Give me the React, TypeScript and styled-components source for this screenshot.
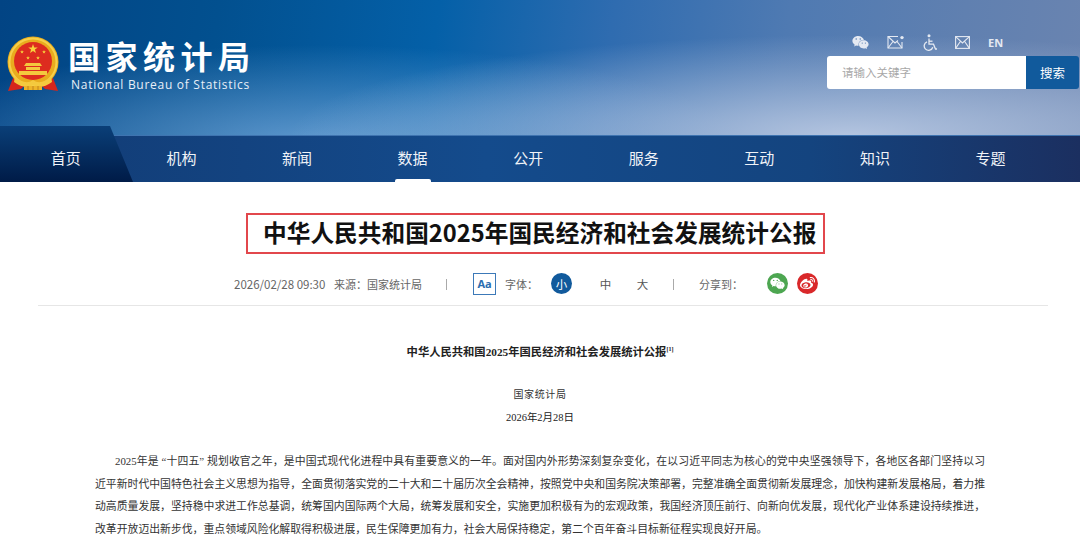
import styled, { createGlobalStyle } from 'styled-components';
import { FaWeixin, FaWeibo } from 'react-icons/fa';

const GlobalStyle = createGlobalStyle`
  html, body {
    margin: 0;
    padding: 0;
    height: 553px;
    overflow: hidden;
    background: #fff;
    font-family: "Noto Sans CJK SC", sans-serif;
  }
  * { box-sizing: border-box; }
`;

const navItems = ['首页', '机构', '新闻', '数据', '公开', '服务', '互动', '知识', '专题'];

const Star = ({ x, y, r }: { x: number; y: number; r: number }) => {
  const pts = Array.from({ length: 10 }, (_, i) => {
    const a = -Math.PI / 2 + (i * Math.PI) / 5;
    const d = i % 2 === 0 ? r : r * 0.4;
    return `${(x + d * Math.cos(a)).toFixed(2)},${(y + d * Math.sin(a)).toFixed(2)}`;
  }).join(' ');
  return <polygon points={pts} fill="#f8d23c" />;
};

const Emblem = () => (
  <svg width="52" height="57" viewBox="0 0 52 57">
    <path d="M6 42 L1 55 L14 53 L20 47 Z" fill="#d5261c" />
    <path d="M46 42 L51 55 L38 53 L32 47 Z" fill="#d5261c" />
    <circle cx="26" cy="26" r="25.5" fill="#e9ac1e" />
    <circle cx="26" cy="26" r="23.5" fill="none" stroke="#f6d04a" strokeWidth="2" />
    <circle cx="26" cy="25" r="19" fill="#dd2c1f" />
    <Star x={26} y={13} r={5} />
    <Star x={15} y={16} r={2} />
    <Star x={37} y={16} r={2} />
    <Star x={21} y={22} r={2} />
    <Star x={31} y={22} r={2} />
    <path d="M17 30 H35 L33 27 H19 Z M19 31 H33 V34 H19 Z M12 35 H40 V39 H12 Z" fill="#f4c93e" />
    <path d="M8 40 Q18 50 26 44 Q34 50 44 40 L45 46 Q34 54 26 49 Q18 54 7 46 Z" fill="#f4c93e" />
    <path d="M17 50 H35 V54 H17 Z" fill="#eeb62a" />
    <path d="M21 50 V54 M26 50 V54 M31 50 V54" stroke="#b5761a" strokeWidth="0.8" />
  </svg>
);

const MailGearIcon = () => (
  <svg width="18" height="14" viewBox="0 0 18 14" fill="none" stroke="#e4e9f2" strokeWidth="1.1">
    <path d="M11 1.5 H1 V13 H15 V7" />
    <path d="M1 1.5 L8 8 L11 5.5 M1 13 L6 6.5 M15 13 L10 6.5" />
    <circle cx="15" cy="2.6" r="1.7" fill="#e4e9f2" stroke="none" />
  </svg>
);

const MailIcon = () => (
  <svg width="15" height="13" viewBox="0 0 15 13" fill="none" stroke="#e4e9f2" strokeWidth="1.1">
    <rect x="0.6" y="0.6" width="13.8" height="11.8" />
    <path d="M0.6 0.6 L7.5 7 L14.4 0.6 M0.6 12.4 L5.5 5.2 M14.4 12.4 L9.5 5.2" />
  </svg>
);

const WheelchairIcon = () => (
  <svg width="14" height="17" viewBox="0 0 14 17" fill="none" stroke="#e4e9f2" strokeWidth="1.3">
    <circle cx="6" cy="1.8" r="1.5" fill="#e4e9f2" stroke="none" />
    <path d="M6 4.5 V10.2 H10.5 L12.5 15 H14" />
    <path d="M6 7.2 H9.5" />
    <path d="M4 7.8 A4.4 4.4 0 1 0 9.8 13.2" />
  </svg>
);

const App = () => (
  <Page>
    <GlobalStyle />
    <Header>
      <Logo>
        <Emblem />
        <LogoText>
          <LogoTitle>国家统计局</LogoTitle>
          <LogoSub>National Bureau of Statistics</LogoSub>
        </LogoText>
      </Logo>
      <Tools>
        <ToolIcons>
          <FaWeixin size={17} />
          <MailGearIcon />
          <WheelchairIcon />
          <MailIcon />
          <EnLink>EN</EnLink>
        </ToolIcons>
        <Search>
          <SearchInput>请输入关键字</SearchInput>
          <SearchBtn>搜索</SearchBtn>
        </Search>
      </Tools>
    </Header>
    <Nav>
      <HomeTab />
      {navItems.map((item) => (
        <NavItem key={item} $active={item === '数据'}>
          {item}
        </NavItem>
      ))}
    </Nav>
    <Main>
      <TitleRow>
        <Title>中华人民共和国2025年国民经济和社会发展统计公报</Title>
      </TitleRow>
      <Meta>
        <MetaDate $w={100}>2026/02/28 09:30</MetaDate>
        <MetaText $w={112}>来源：国家统计局</MetaText>
        <Sep $w={27} />
        <AaBox>Aa</AaBox>
        <MetaText $w={46} $ml={9}>字体：</MetaText>
        <SizeBtn $active $mr={23}>小</SizeBtn>
        <SizeBtn $mr={16}>中</SizeBtn>
        <SizeBtn $mr={20}>大</SizeBtn>
        <Sep $w={26} />
        <MetaText $w={68}>分享到：</MetaText>
        <ShareRound $bg="#4da651">
          <FaWeixin size={15} />
        </ShareRound>
        <ShareRound $bg="#d9282a">
          <FaWeibo size={15} />
        </ShareRound>
      </Meta>
      <Article>
        <ArticleTitle>
          中华人民共和国2025年国民经济和社会发展统计公报<Note>[1]</Note>
        </ArticleTitle>
        <Org>国家统计局</Org>
        <ArticleDate>2026年2月28日</ArticleDate>
        <Para>
          2025年是 “十四五” 规划收官之年，是中国式现代化进程中具有重要意义的一年。面对国内外形势深刻复杂变化，在以习近平同志为核心的党中央坚强领导下，各地区各部门坚持以习近平新时代中国特色社会主义思想为指导，全面贯彻落实党的二十大和二十届历次全会精神，按照党中央和国务院决策部署，完整准确全面贯彻新发展理念，加快构建新发展格局，着力推动高质量发展，坚持稳中求进工作总基调，统筹国内国际两个大局，统筹发展和安全，实施更加积极有为的宏观政策，我国经济顶压前行、向新向优发展，现代化产业体系建设持续推进，改革开放迈出新步伐，重点领域风险化解取得积极进展，民生保障更加有力，社会大局保持稳定，第二个百年奋斗目标新征程实现良好开局。
        </Para>
      </Article>
    </Main>
  </Page>
);

export default App;

const Page = styled.div`
  width: 1080px;
  height: 553px;
  overflow: hidden;
  background: #fff;
`;

const Header = styled.header`
  height: 135px;
  padding: 36px 1px 0 7px;
  display: flex;
  justify-content: space-between;
  background:
    radial-gradient(ellipse 560px 100px at 850px 135px, rgba(184, 200, 226, 0.95), rgba(184, 200, 226, 0) 100%),
    radial-gradient(ellipse 420px 100px at 320px 145px, rgba(120, 170, 220, 0.8), rgba(120, 170, 220, 0) 100%),
    linear-gradient(98deg, #024484 0%, #02508f 20%, #0460a8 40%, #2f6cb0 56%, #4f7ab2 72%, #6080b0 88%, #6a84b0 100%);
`;

const Logo = styled.div`
  display: flex;
  gap: 9px;
  align-items: flex-start;
`;

const LogoText = styled.div`
  display: flex;
  flex-direction: column;
  margin-top: 1px;
`;

const LogoTitle = styled.div`
  font-size: 32px;
  font-weight: 700;
  line-height: 36px;
  letter-spacing: 5.5px;
  color: #fff;
  white-space: nowrap;
`;

const LogoSub = styled.div`
  font-family: "Open Sans", "Liberation Sans", sans-serif;
  font-size: 12px;
  line-height: 17px;
  margin-top: 3px;
  margin-left: 3px;
  letter-spacing: 0.72px;
  color: #e8eff8;
  white-space: nowrap;
`;

const Tools = styled.div`
  display: flex;
  flex-direction: column;
  width: 252px;
  margin-top: -1px;
`;

const ToolIcons = styled.div`
  display: flex;
  align-items: center;
  height: 14px;
  gap: 18px;
  padding-left: 25px;
  color: #e4e9f2;
  margin-bottom: 7px;
`;

const EnLink = styled.span`
  font-family: "Open Sans", "Liberation Sans", sans-serif;
  font-size: 11px;
  font-weight: 700;
`;

const Search = styled.div`
  display: flex;
  height: 33px;
`;

const SearchInput = styled.div`
  width: 199px;
  background: #fff;
  border-radius: 3px 0 0 3px;
  padding-left: 15px;
  font-size: 11.5px;
  line-height: 32px;
  color: #a8a8a8;
`;

const SearchBtn = styled.div`
  width: 53px;
  background: #115a9c;
  border-radius: 0 3px 3px 0;
  color: #fff;
  font-size: 12.5px;
  line-height: 33px;
  text-align: center;
`;

const Nav = styled.nav`
  position: relative;
  height: 47px;
  padding-left: 8px;
  display: flex;
  border-top: 1px solid #3f74b0;
  background: linear-gradient(90deg, #123b74 0%, #144b8c 45%, #14447f 75%, #1b2f60 100%);
`;

const HomeTab = styled.div`
  position: absolute;
  left: 0;
  top: -10px;
  width: 133px;
  height: 56px;
  clip-path: polygon(0 0, 110px 0, 133px 100%, 0 100%);
  background: linear-gradient(180deg, #0a3f78 0%, #001b47 100%);
`;

const NavItem = styled.div<{ $active?: boolean }>`
  position: relative;
  width: 115.6px;
  text-align: center;
  font-size: 15px;
  line-height: 43px;
  color: #f0f3f8;

  &::after {
    content: '';
    display: ${({ $active }) => ($active ? 'block' : 'none')};
    position: absolute;
    left: 40px;
    bottom: 0;
    width: 36px;
    height: 3px;
    border-radius: 2px 2px 0 0;
    background: #fff;
  }
`;

const Main = styled.main`
  padding: 31px 32px 0 38px;
`;

const TitleRow = styled.div`
  display: flex;
  padding-left: 208px;
`;

const Title = styled.h1`
  margin: 0;
  width: 579px;
  height: 41px;
  padding-left: 15px;
  border: 2px solid #e2474c;
  font-size: 23.7px;
  font-weight: 700;
  line-height: 35px;
  color: #111;
  white-space: nowrap;
`;

const Meta = styled.div`
  height: 52px;
  padding: 19px 0 0 196px;
  border-bottom: 1px solid #e6e6e6;
  display: flex;
  align-items: flex-start;
`;

const MetaText = styled.span<{ $w: number; $ml?: number }>`
  width: ${({ $w }) => $w}px;
  margin-left: ${({ $ml }) => $ml || 0}px;
  flex: none;
  font-size: 11px;
  line-height: 23px;
  color: #666;
  white-space: nowrap;
`;

const MetaDate = styled(MetaText)`
  font-size: 11.5px;
`;

const Sep = styled.span<{ $w: number }>`
  width: ${({ $w }) => $w}px;
  flex: none;

  &::before {
    content: '';
    display: block;
    width: 1px;
    height: 11px;
    margin-top: 6px;
    background: #aaa;
  }
`;

const AaBox = styled.span`
  width: 23px;
  height: 22px;
  flex: none;
  border: 1px solid #3c79b8;
  color: #2a6db0;
  font-family: "Open Sans", "Liberation Sans", sans-serif;
  font-size: 11px;
  font-weight: 700;
  line-height: 20px;
  text-align: center;
`;

const SizeBtn = styled.span<{ $active?: boolean; $mr: number }>`
  width: 21px;
  height: 21px;
  flex: none;
  margin-right: ${({ $mr }) => $mr}px;
  border-radius: 50%;
  background: ${({ $active }) => ($active ? '#115a9c' : 'transparent')};
  color: ${({ $active }) => ($active ? '#fff' : '#555')};
  font-size: 11.5px;
  line-height: 22px;
  text-align: center;
`;

const ShareRound = styled.span<{ $bg: string }>`
  width: 21px;
  height: 21px;
  flex: none;
  margin-right: 9px;
  border-radius: 50%;
  background: ${({ $bg }) => $bg};
  color: #fff;
  display: flex;
  align-items: center;
  justify-content: center;
`;

const Article = styled.article`
  padding: 0 63px 0 57px;
  font-family: "Liberation Serif", "Noto Sans CJK SC", serif;
  color: #222;
`;

const ArticleTitle = styled.div`
  margin-top: 37px;
  text-align: center;
  font-size: 11.3px;
  font-weight: 700;
  line-height: 18px;
`;

const Note = styled.sup`
  font-size: 6px;
  line-height: 0;
`;

const Org = styled.div`
  margin-top: 26px;
  text-align: center;
  font-size: 10px;
  line-height: 16px;
  letter-spacing: 0.6px;
  color: #333;
`;

const ArticleDate = styled.div`
  margin-top: 7px;
  text-align: center;
  font-size: 10.5px;
  line-height: 16px;
`;

const Para = styled.p`
  margin: 24px 0 0;
  font-size: 10.85px;
  line-height: 22.5px;
  text-indent: 20px;
  text-align: justify;
  color: #333;
`;
